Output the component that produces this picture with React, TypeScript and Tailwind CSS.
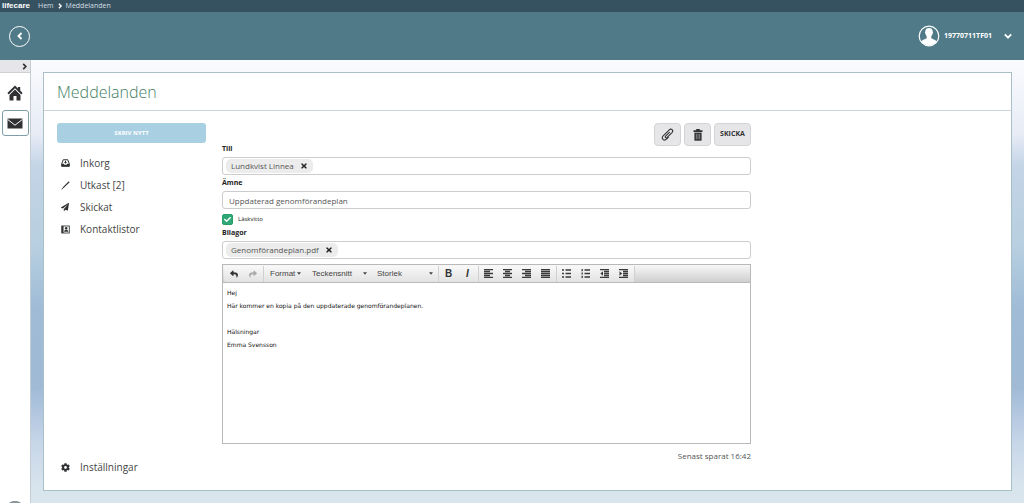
import { useState } from "react";
import type { ReactNode } from "react";
import { FaCheck, FaCog, FaPaperPlane, FaReply, FaShare, FaTimes } from "react-icons/fa";

const MESSAGE = `Hej
Här kommer en kopia på den uppdaterade genomförandeplanen.

Hälsningar
Emma Svensson`;

/* Icons */

function Chevron({ d, className }: { d: string; className: string }) {
  return (
    <svg viewBox="0 0 8 8" className={className}>
      <path d={d} fill="none" stroke="currentColor" strokeWidth="1.900" />
    </svg>
  );
}

const LEFT = "M5.500 1 2.500 4l3 3";
const RIGHT = "M2.500 1l3 3-3 3";
const DOWN = "M.8 2.400 4 5.600l3.200-3.200";

function HomeIcon() {
  return (
    <svg viewBox="0 0 16 16" className="h-4 w-4" fill="currentColor">
      <path d="M8 .6 .4 8l1.3 1.4L8 3.3l6.3 6.1L15.6 8l-2.4-2.4V2h-2.3v1.4z" />
      <path d="M8 4.6 2.500 9.9V15.500h4V11h3v4.500h4V9.9z" />
    </svg>
  );
}

function MailIcon() {
  return (
    <svg viewBox="0 0 16 11" className="h-[11px] w-4">
      <path d="M.5.5h15v10H.5z" fill="#2f3133" />
      <path d="M.6 1.4 8 7.2l7.4-5.8" fill="none" stroke="#fff" strokeWidth="1" />
    </svg>
  );
}

function UserIcon() {
  return (
    <svg viewBox="0 0 22 22" className="size-[22px]">
      <circle cx="11" cy="11" r="9.800" fill="none" stroke="#fff" strokeWidth="1.200" />
      <path
        d="M7.300 6.600C7.300 4 8.800 3 11 3s3.700 1 3.700 3.600c.5.2.5 2-.2 2.200-.2 1.200-.8 2-1.200 2.400v1.700c.8 1.300 4.800 1.600 5.500 3.700A9.300 9.300 0 0 1 11 20.400a9.300 9.300 0 0 1-7.800-3.800c.7-2.100 4.700-2.400 5.500-3.700v-1.700c-.4-.4-1-1.200-1.200-2.400-.7-.2-.7-2-.2-2.200z"
        fill="#fff"
      />
    </svg>
  );
}

function InboxIcon() {
  return (
    <svg viewBox="0 0 18 16" className="h-2 w-[9px]">
      <path
        d="M4.500 1.500h9l3 8v5h-15v-5z"
        fill="none"
        stroke="currentColor"
        strokeWidth="2"
        strokeLinejoin="round"
      />
      <path d="M1 9.500h4.500l1.500 2h4l1.500-2H17V15H1z" fill="currentColor" />
      <path d="M8 3.500h2v2.500h2L9 9.500 6 6h2z" fill="currentColor" />
    </svg>
  );
}

function PencilIcon() {
  return (
    <svg viewBox="0 0 16 16" className="size-[9px]" fill="currentColor">
      <path d="M13.800.6 15.400 2.200 4.200 13 2.800 11.600zM2.200 12.200l1.500 1.500L.6 15.400z" />
    </svg>
  );
}

function ContactsIcon() {
  return (
    <svg viewBox="0 0 16 16" className="size-[9px]">
      <path d="M.5 1h15v14H.5z" fill="currentColor" />
      <path d="M4.500 2.500h9.500v11H4.500z" fill="#fff" />
      <circle cx="9.200" cy="5.800" r="2.200" fill="currentColor" />
      <path d="M5.500 12c0-4.500 7.500-4.500 7.500 0z" fill="currentColor" />
    </svg>
  );
}

function ClipIcon() {
  return (
    <svg
      viewBox="0 0 24 24"
      className="size-[13px]"
      fill="none"
      stroke="currentColor"
      strokeWidth="2"
      strokeLinecap="round"
    >
      <path d="m15.500 8.200-7 7c-1.800 1.800.7 4.300 2.500 2.500l9.300-9.300c3.500-3.700-1.300-8.500-5-5L4 14.600c-4.500 4.700 1.600 10.500 6.200 6l3.300-3.300" />
    </svg>
  );
}

function TrashIcon() {
  return (
    <svg viewBox="0 0 16 20" className="h-[12px] w-[10px]">
      <path d="M5 0h6v2h4.500v3H.5V2H5z" fill="#2f3133" />
      <path d="M2 6h12v13.500H2z" fill="#2f3133" />
      <path d="M5.300 8v9M8 8v9M10.700 8v9" stroke="#a0a0a2" strokeWidth="1.200" />
    </svg>
  );
}

function LinesIcon({ d }: { d: string }) {
  return (
    <svg viewBox="0 0 9 9" className="size-[9px]">
      <path d={d} stroke="#3a3a3a" strokeWidth="1.300" fill="none" />
    </svg>
  );
}

function IndentIcon({ out = false }: { out?: boolean }) {
  return (
    <svg viewBox="0 0 9 9" className="size-[9px]">
      <path d="M0 .5h9M4 2.500h5M4 4.500h5M4 6.500h5M0 8.500h9" stroke="#3a3a3a" strokeWidth="1.300" />
      <path d={out ? "M3 2.200v4.600L.3 4.500z" : "M.5 2.200v4.600l2.700-2.300z"} fill="#3a3a3a" />
    </svg>
  );
}

const NAV = [
  { label: "Inkorg", icon: <InboxIcon /> },
  { label: "Utkast [2]", icon: <PencilIcon /> },
  { label: "Skickat", icon: <FaPaperPlane size={8} /> },
  { label: "Kontaktlistor", icon: <ContactsIcon /> },
];

const ALIGN = [
  { label: "Vänsterjustera", d: "M0 .5h9M0 2.500h6M0 4.500h9M0 6.500h6M0 8.500h9" },
  { label: "Centrera", d: "M0 .5h9M2 2.500h5M0 4.500h9M2 6.500h5M0 8.500h9" },
  { label: "Högerjustera", d: "M0 .5h9M3 2.500h6M0 4.500h9M3 6.500h6M0 8.500h9" },
  { label: "Justera", d: "M0 .5h9M0 2.500h9M0 4.500h9M0 6.500h9M0 8.500h9" },
];

/* Form parts */

function NavLink({ icon, label }: { icon: ReactNode; label: string }) {
  return (
    <a href="#" className="flex h-[22px] items-center text-[10px] text-[#444]">
      <span className="flex w-[23px] pl-1 text-[#2f3133]">{icon}</span>
      {label}
    </a>
  );
}

function ChipField({ id, label, chip }: { id: string; label: string; chip: string }) {
  const [chips, setChips] = useState([chip]);

  return (
    <div>
      <label htmlFor={id} className="block h-4 text-[7px] leading-4 font-bold text-[#222]">
        {label}
      </label>
      <div className="flex h-[18px] items-center rounded-[3px] border border-[#ccc] px-[3px]">
        {chips.map((c) => (
          <span
            key={c}
            className="flex h-[14px] items-center gap-[6px] rounded-[5px] bg-[#ececec] px-[5px] text-[8px] whitespace-nowrap text-[#555]"
          >
            {c}
            <button
              type="button"
              aria-label={`Ta bort ${c}`}
              onClick={() => setChips(chips.filter((x) => x !== c))}
              className="text-[#222]"
            >
              <FaTimes size={8} />
            </button>
          </span>
        ))}
        <input id={id} className="min-w-0 flex-1 px-1 text-[8px] outline-none" />
      </div>
    </div>
  );
}

function ToolButton({ label, children }: { label: string; children: ReactNode }) {
  return (
    <button
      type="button"
      aria-label={label}
      className="flex h-4 w-[19px] items-center justify-center text-[#333]"
    >
      {children}
    </button>
  );
}

function ToolSelect({ label, className }: { label: string; className: string }) {
  return (
    <div className={`relative flex items-center ${className}`}>
      <select
        aria-label={label}
        className="h-4 w-full appearance-none text-[8px] text-[#444] outline-none"
      >
        <option>{label}</option>
      </select>
      <svg viewBox="0 0 5 3" className="pointer-events-none absolute right-0 h-[3px] w-1">
        <path d="M0 0h5L2.500 3z" fill="#444" />
      </svg>
    </div>
  );
}

function ToolGroup({ children }: { children: ReactNode }) {
  return <div className="flex items-center border-r border-[#d0d0d0] pr-px">{children}</div>;
}

function Editor() {
  const [text, setText] = useState(MESSAGE);

  return (
    <div className="mt-[5px] border border-[#b9b9b9]">
      <div className="flex h-[18px] items-center border-b border-[#b9b9b9] bg-linear-to-b from-[#f7f7f7] to-[#cfcfcf] pl-px font-['Liberation_Sans',sans-serif]">
        <div className="flex rounded-xs bg-white/40">
          <ToolGroup>
            <ToolButton label="Ångra">
              <FaReply size={8} />
            </ToolButton>
            <ToolButton label="Gör om">
              <FaShare size={8} className="text-[#aaa]" />
            </ToolButton>
          </ToolGroup>
          <ToolGroup>
            <ToolSelect label="Format" className="ml-[6px] w-[31px]" />
            <ToolSelect label="Teckensnitt" className="ml-[11px] w-[55px]" />
            <ToolSelect label="Storlek" className="mr-[4px] ml-[10px] w-[56px]" />
          </ToolGroup>
          <ToolGroup>
            <ToolButton label="Fet">
              <span className="text-[10px] font-bold">B</span>
            </ToolButton>
            <ToolButton label="Kursiv">
              <span className="text-[10px] font-bold italic">I</span>
            </ToolButton>
          </ToolGroup>
          <ToolGroup>
            {ALIGN.map((a) => (
              <ToolButton key={a.label} label={a.label}>
                <LinesIcon d={a.d} />
              </ToolButton>
            ))}
          </ToolGroup>
          <ToolGroup>
            <ToolButton label="Punktlista">
              <LinesIcon d="M0 1h2M3.500 1h5.500M0 4.500h2M3.500 4.500h5.500M0 8h2M3.500 8h5.500" />
            </ToolButton>
            <ToolButton label="Numrerad lista">
              <LinesIcon d="M1.200 0v2.200M1.200 3.400v2.200M1.200 6.800v2.200M3.500 1h5.500M3.500 4.500h5.500M3.500 8h5.500" />
            </ToolButton>
            <ToolButton label="Minska indrag">
              <IndentIcon out />
            </ToolButton>
            <ToolButton label="Öka indrag">
              <IndentIcon />
            </ToolButton>
          </ToolGroup>
        </div>
      </div>
      <textarea
        aria-label="Meddelande"
        value={text}
        onChange={(e) => setText(e.target.value)}
        className="block h-40 w-full resize-none px-1 py-[3px] font-['DejaVu_Sans',sans-serif] text-[6px] leading-[13px] text-[#111] outline-none"
      />
    </div>
  );
}

function MessageForm() {
  const [subject, setSubject] = useState("Uppdaterad genomförandeplan");
  const [receipt, setReceipt] = useState(true);

  const action =
    "flex h-[23px] items-center justify-center rounded-[4px] border border-[#d3d3d5] bg-[#e6e6e8] text-[#333]";

  return (
    <form className="max-w-[529px] flex-1" onSubmit={(e) => e.preventDefault()}>
      <div className="-mb-[5px] flex justify-end gap-[3px]">
        <button type="button" aria-label="Bifoga fil" className={`${action} w-[27px]`}>
          <ClipIcon />
        </button>
        <button type="button" aria-label="Ta bort" className={`${action} w-[27px]`}>
          <TrashIcon />
        </button>
        <button type="submit" className={`${action} w-[37px] text-[7px] font-bold`}>
          SKICKA
        </button>
      </div>

      <ChipField id="to" label="Till" chip="Lundkvist Linnea" />

      <label htmlFor="subject" className="block h-4 text-[7px] leading-4 font-bold text-[#222]">
        Ämne
      </label>
      <input
        id="subject"
        value={subject}
        onChange={(e) => setSubject(e.target.value)}
        className="block h-[18px] w-full rounded-[3px] border border-[#ccc] px-[6px] text-[8px] text-[#555] outline-none"
      />

      <label className="mt-1 flex h-3 items-center gap-[5px] text-[6px] text-[#222]">
        <span className="relative flex size-[11px]">
          <input
            type="checkbox"
            checked={receipt}
            onChange={(e) => setReceipt(e.target.checked)}
            className="peer size-[11px] appearance-none rounded-[2px] border border-[#2a9d6c] checked:bg-[#2fa877]"
          />
          <FaCheck
            size={7}
            className="pointer-events-none absolute top-[2px] left-[2px] hidden text-white peer-checked:block"
          />
        </span>
        Läskvitto
      </label>

      <ChipField id="files" label="Bilagor" chip="Genomförandeplan.pdf" />

      <Editor />

      <p className="mt-[6px] text-right text-[8px] leading-3 text-[#555]">Senast sparat 16:42</p>
    </form>
  );
}

export default function App() {
  return (
    <div className="flex min-h-screen flex-col bg-white font-['Open_Sans',sans-serif]">
      {/* Breadcrumb */}
      <nav className="flex h-3 items-center bg-[#365260] px-[2px] text-[7px] leading-3 text-[#d5dfe3]">
        <a href="#" className="mr-2 font-['Liberation_Sans',sans-serif] text-[8px] font-bold text-white">
          lifecare
        </a>
        <a href="#">Hem</a>
        <Chevron d={RIGHT} className="mx-[3px] size-[6px] text-white" />
        <span>Meddelanden</span>
      </nav>

      {/* Header */}
      <header className="flex h-12 items-center justify-between bg-[#507a87] pr-3 pl-[9px] text-white">
        <button
          type="button"
          aria-label="Tillbaka"
          className="flex size-[21px] items-center justify-center rounded-full border border-white"
        >
          <Chevron d={LEFT} className="size-[8px]" />
        </button>
        <button type="button" className="flex items-center text-[7px] font-bold">
          <UserIcon />
          <span className="ml-1">19770711TF01</span>
          <Chevron d={DOWN} className="ml-3 size-[8px]" />
        </button>
      </header>

      <div className="flex flex-1">
        {/* Side menu */}
        <aside className="flex w-[31px] shrink-0 flex-col items-center border-r border-[#c5ccd2] bg-white text-[#2f3133]">
          <button
            type="button"
            aria-label="Expandera meny"
            className="flex h-[13px] w-full items-center justify-end border-b border-[#d0d0d4] bg-[#e6e6ea] pr-[2px]"
          >
            <Chevron d={RIGHT} className="size-[7px]" />
          </button>
          <a href="#" aria-label="Hem" className="mt-3">
            <HomeIcon />
          </a>
          <a
            href="#"
            aria-label="Meddelanden"
            className="mt-[9px] flex h-[26px] w-[27px] items-center justify-center rounded-[3px] border border-[#7f9fa8]"
          >
            <MailIcon />
          </a>
          <svg viewBox="0 0 14 3" className="mt-auto h-[3px] w-[14px]">
            <path d="M1 3C4 .4 10 .4 13 3z" fill="#8a9499" />
          </svg>
        </aside>

        {/* Content */}
        <main className="flex flex-1 bg-[linear-gradient(#fafbfe_0%,#e6ebf5_17%,#c3d4e6_24%,#b7cfe0_42%,#9fbbd6_56%,#a0bad6_74%,#c6d5e8_86%,#d9e5ed_97%)] p-3">
          <section className="flex flex-1 flex-col border border-[#a9c0c9] bg-white">
            <h1 className="h-[38px] border-b border-[#cbd3d8] px-[13px] text-[16px] leading-[38px] font-light text-[#3f8062]">
              Meddelanden
            </h1>
            <div className="flex flex-1 gap-4 px-[13px] pt-3 pb-[12px]">
              <div className="flex w-[149px] shrink-0 flex-col">
                <button
                  type="button"
                  className="mb-[9px] h-5 rounded-[3px] bg-[#a8d0e2] text-[6px] font-bold text-white"
                >
                  SKRIV NYTT
                </button>
                {NAV.map((n) => (
                  <NavLink key={n.label} {...n} />
                ))}
                <div className="mt-auto">
                  <NavLink icon={<FaCog size={9} />} label="Inställningar" />
                </div>
              </div>
              <MessageForm />
            </div>
          </section>
        </main>
      </div>
    </div>
  );
}
